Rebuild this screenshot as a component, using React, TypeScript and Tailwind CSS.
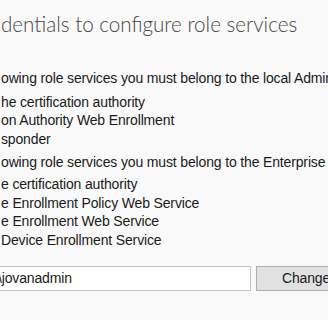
const localItems = ['he certification authority', 'on Authority Web Enrollment', 'sponder']
const enterpriseItems = [
  'e certification authority',
  'e Enrollment Policy Web Service',
  'e Enrollment Web Service',
  'Device Enrollment Service',
]

export default function App() {
  return (
    <div
      className="w-[328px] h-[320px] overflow-hidden bg-[#f9f9f9] text-[#1a1a1a] whitespace-nowrap"
      style={{ fontFamily: '"Liberation Sans", Arial, sans-serif' }}
    >
      {/* Page title */}
      <h1
        className="pt-[9px] pl-px text-[20.6px] leading-[30px] font-light text-[#454545]"
        style={{ fontFamily: 'Lato, "Open Sans", sans-serif' }}
      >
        dentials to configure role services
      </h1>

      <div className="mt-[30px] pl-px text-[14px] leading-[18.5px] tracking-[-0.15px]">
        <p>owing role services you must belong to the local Administrators group:</p>
        <ul className="mt-[5px]">
          {localItems.map((item) => (
            <li key={item}>{item}</li>
          ))}
        </ul>

        <p className="mt-[4.5px]">owing role services you must belong to the Enterprise Admins group:</p>
        <ul className="mt-[4px]">
          {enterpriseItems.map((item) => (
            <li key={item}>{item}</li>
          ))}
        </ul>
      </div>

      {/* Credentials row */}
      <div className="mt-[17px] flex items-stretch gap-[5px] text-[14px] tracking-[-0.15px]">
        <div className="shrink-0 w-[251px] h-[25px] bg-white border border-[#c2c2c2] border-l-0 flex items-center">
          <span className="-ml-[2px]">\jovanadmin</span>
        </div>
        <button className="shrink-0 w-[100px] h-[25px] bg-[#e1e1e1] border border-[#adadad] text-left pl-[25px]">
          Change...
        </button>
      </div>
    </div>
  )
}
